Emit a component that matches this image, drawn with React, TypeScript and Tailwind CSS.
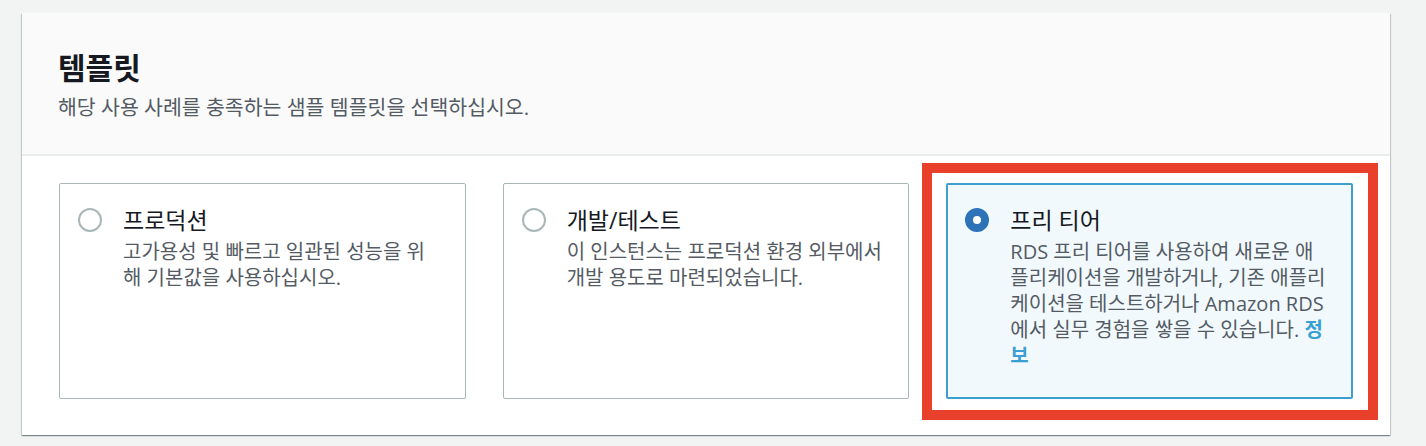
import React from "react";

type Option = {
  title: string;
  lines: React.ReactNode[];
  selected?: boolean;
};

const options: Option[] = [
  {
    title: "프로덕션",
    lines: ["고가용성 및 빠르고 일관된 성능을 위", "해 기본값을 사용하십시오."],
  },
  {
    title: "개발/테스트",
    lines: ["이 인스턴스는 프로덕션 환경 외부에서", "개발 용도로 마련되었습니다."],
  },
  {
    title: "프리 티어",
    selected: true,
    lines: [
      "RDS 프리 티어를 사용하여 새로운 애",
      "플리케이션을 개발하거나, 기존 애플리",
      "케이션을 테스트하거나 Amazon RDS",
      <>
        에서 실무 경험을 쌓을 수 있습니다.{" "}
        <a className="font-bold text-[#3a9fd2]">정</a>
      </>,
      <a className="font-bold text-[#3a9fd2]">보</a>,
    ],
  },
];

function Radio({ selected }: { selected?: boolean }) {
  if (selected) {
    return <span className="mt-[2px] block h-[24px] w-[24px] shrink-0 rounded-full border-[8px] border-[#2e73b8] bg-white" />;
  }
  return <span className="mt-[2px] block h-[24px] w-[24px] shrink-0 rounded-full border-2 border-[#aab7b8] bg-white" />;
}

function Tile({ option }: { option: Option }) {
  const box = option.selected
    ? "border-2 border-[#3d9fcf] bg-[#f1f9fd] pl-[17px] pt-[21px]"
    : "border border-[#aab7b8] bg-white pl-[18px] pt-[22px]";

  return (
    <div className="relative">
      {option.selected && (
        <span className="pointer-events-none absolute left-[-24px] right-[-25px] top-[-20px] bottom-[-21px] border-[10px] border-[#e8402a]" />
      )}
      <div className={`flex h-full gap-[21px] rounded-[2px] pr-[14px] pb-[28px] ${box}`}>
        <Radio selected={option.selected} />
        <div>
          <div className="text-[23px] leading-[28px] text-[#16191f]">{option.title}</div>
          <p className="mt-[5px] whitespace-nowrap text-[20px] leading-[26px] text-[#545b64]">
            {option.lines.map((line, i) => (
              <React.Fragment key={i}>
                {line}
                {i < option.lines.length - 1 && <br />}
              </React.Fragment>
            ))}
          </p>
        </div>
      </div>
    </div>
  );
}

export default function App() {
  return (
    <div className="min-h-screen bg-[#f2f3f3] pt-[13px] pl-[22px] pr-[36px] font-['Open_Sans','Noto_Sans_CJK_KR',sans-serif]">
      <div className="bg-white shadow-[0_1px_1px_0_rgba(0,28,36,0.3),1px_1px_1px_0_rgba(0,28,36,0.15),-1px_1px_1px_0_rgba(0,28,36,0.15)]">
        <div className="border-b-2 border-[#eaeded] bg-[#fafafa] px-[36px] pt-[36px] pb-[34px]">
          <h2 className="text-[30px] font-bold leading-[38px] text-[#16191f]">템플릿</h2>
          <p className="mt-[7px] text-[20.5px] leading-[26px] text-[#545b64]">
            해당 사용 사례를 충족하는 샘플 템플릿을 선택하십시오.
          </p>
        </div>
        <div className="grid grid-cols-3 gap-[37px] px-[37px] pt-[27px] pb-[36px]">
          {options.map((o) => (
            <Tile key={o.title} option={o} />
          ))}
        </div>
      </div>
    </div>
  );
}
